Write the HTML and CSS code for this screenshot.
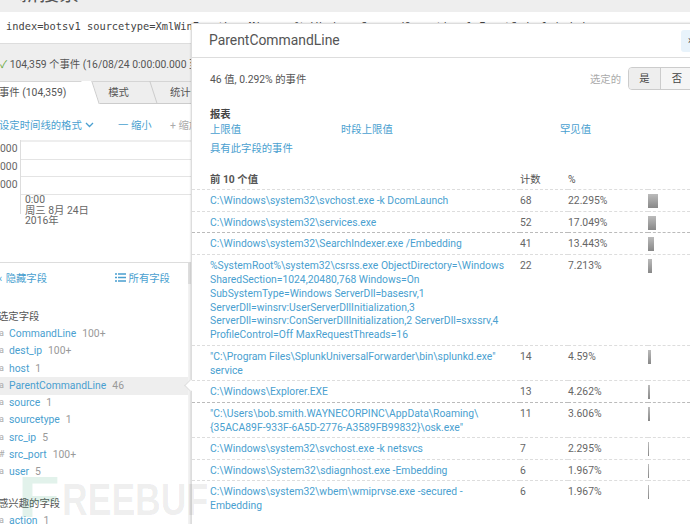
FILE: index.html
```html
<!DOCTYPE html>
<html lang="zh">
<head>
<meta charset="utf-8">
<title>新搜索</title>
<link rel="stylesheet" href="styles.css">
</head>
<body>
<div class="page">
  <div class="titlebar"><span class="title">‹ 新搜索</span></div>
  <div class="searchbar">index=botsv1 sourcetype=XmlWinEventLog:Microsoft-Windows-Sysmon/Operational EventCode=1 | dedup</div>
  <div class="status"><span class="check">✓</span> 104,359 个事件 (16/08/24 0:00:00.000 至 16/08/25 0:00:00.000)</div>
  <div class="tabs">
    <div class="tab active">事件 (104,359)</div>
    <div class="tab">模式</div>
    <div class="tab">统计信息</div>
  </div>
  <div class="timeline-tools">
    <span class="tl-format">设定时间线的格式 <svg class="chev" width="9" height="6" viewBox="0 0 9 6"><path d="M1 1l3.500 3.500L8 1" fill="none" stroke="#4a9fd0" stroke-width="1.300"/></svg></span>
    <span class="tl-out">一 缩小</span>
    <span class="tl-in">+ 缩放</span>
  </div>
  <div class="chart">
    <div class="axis">
      <div>000</div><div>000</div><div>000</div>
    </div>
    <div class="plot">
      <div class="gridline"></div><div class="gridline"></div><div class="gridline"></div>
    </div>
  </div>
  <div class="ticks">0:00<br>周三 8月 24日<br>2016年</div>
  <div class="fields">
    <div class="field-col">
      <div class="field-tools">
        <span class="hide-f"><span class="lt">‹</span> 隐藏字段</span>
        <span class="all-f"><svg width="11" height="9" viewBox="0 0 11 9"><path d="M0 1h2M3 1h8M0 4.500h2M3 4.500h8M0 8h2M3 8h8" stroke="#4a9fd0" stroke-width="1.300"/></svg> 所有字段</span>
      </div>
      <div class="group-title">选定字段</div>
      <ul class="field-list">
        <li><i>a</i><a>CommandLine</a><b>100+</b></li>
        <li><i>a</i><a>dest_ip</a><b>100+</b></li>
        <li><i>a</i><a>host</a><b>1</b></li>
        <li class="sel"><i>a</i><a>ParentCommandLine</a><b>46</b></li>
        <li><i>a</i><a>source</a><b>1</b></li>
        <li><i>a</i><a>sourcetype</a><b>1</b></li>
        <li><i>a</i><a>src_ip</a><b>5</b></li>
        <li><i>#</i><a>src_port</a><b>100+</b></li>
        <li><i>a</i><a>user</a><b>5</b></li>
      </ul>
      <div class="group-title second">感兴趣的字段</div>
      <ul class="field-list">
        <li><i>a</i><a>action</a><b>1</b></li>
      </ul>
    </div>
    <div class="rail"><div class="thumb"></div></div>
  </div>
</div>

<div class="popover">
  <div class="pop-head"><h2>ParentCommandLine</h2><span class="close">×</span></div>
  <div class="pop-body">
    <div class="summary">
      <span>46 值, 0.292% 的事件</span>
      <div class="selected"><span class="sel-label">选定的</span><div class="seg"><span class="on">是</span><span>否</span></div></div>
    </div>
    <h3 class="reports">报表</h3>
    <div class="links"><a>上限值</a><a>时段上限值</a><a>罕见值</a></div>
    <div class="withfield"><a>具有此字段的事件</a></div>
  </div>
  <table class="vals">
    <thead><tr><th class="c1">前 10 个值</th><th class="c2">计数</th><th class="c3">%</th><th class="c4"></th></tr></thead>
    <tbody>
      <tr><td class="c1"><a>C:\Windows\system32\svchost.exe -k DcomLaunch</a></td><td>68</td><td>22.295%</td><td><span class="bar" style="width:10px"></span></td></tr>
      <tr class="heavy"><td class="c1"><a>C:\Windows\system32\services.exe</a></td><td>52</td><td>17.049%</td><td><span class="bar" style="width:8px"></span></td></tr>
      <tr><td class="c1"><a>C:\Windows\system32\SearchIndexer.exe /Embedding</a></td><td>41</td><td>13.443%</td><td><span class="bar" style="width:6px"></span></td></tr>
      <tr><td class="c1"><a>%SystemRoot%\system32\csrss.exe ObjectDirectory=\Windows SharedSection=1024,20480,768 Windows=On SubSystemType=Windows ServerDll=basesrv,1 ServerDll=winsrv:UserServerDllInitialization,3 ServerDll=winsrv:ConServerDllInitialization,2 ServerDll=sxssrv,4 ProfileControl=Off MaxRequestThreads=16</a></td><td>22</td><td>7.213%</td><td><span class="bar" style="width:4px"></span></td></tr>
      <tr><td class="c1"><a>"C:\Program Files\SplunkUniversalForwarder\bin\splunkd.exe" service</a></td><td>14</td><td>4.59%</td><td><span class="bar" style="width:3px"></span></td></tr>
      <tr class="heavy"><td class="c1"><a>C:\Windows\Explorer.EXE</a></td><td>13</td><td>4.262%</td><td><span class="bar" style="width:2px"></span></td></tr>
      <tr><td class="c1"><a>"C:\Users\bob.smith.WAYNECORPINC\AppData\Roaming\ {35ACA89F-933F-6A5D-2776-A3589FB99832}\osk.exe"</a></td><td>11</td><td>3.606%</td><td><span class="bar" style="width:2px"></span></td></tr>
      <tr><td class="c1"><a>C:\Windows\system32\svchost.exe -k netsvcs</a></td><td>7</td><td>2.295%</td><td><span class="bar" style="width:1px"></span></td></tr>
      <tr><td class="c1"><a>C:\Windows\System32\sdiagnhost.exe -Embedding</a></td><td>6</td><td>1.967%</td><td><span class="bar" style="width:1px"></span></td></tr>
      <tr class="last"><td class="c1"><a>C:\Windows\system32\wbem\wmiprvse.exe -secured -Embedding</a></td><td>6</td><td>1.967%</td><td><span class="bar" style="width:1px"></span></td></tr>
    </tbody>
  </table>
</div>
<div class="arrow"></div>
<div class="watermark"><span class="wm-f">F</span><span class="wm-r">REEBUF</span></div>
</body>
</html>
```
FILE: styles.css
```css
* { box-sizing: border-box; }
html, body { margin: 0; padding: 0; }
body {
  width: 690px; height: 524px; overflow: hidden; position: relative;
  background: #fff; color: #555;
  font-family: Roboto, "Noto Sans CJK SC", sans-serif; font-size: 10.350px;
}
.page { width: 690px; height: 524px; overflow: hidden; }
.titlebar { height: 12px; background: #eee; overflow: hidden; position: relative; }
.title { position: absolute; left: 8px; top: -16px; font-size: 20px; line-height: 20px; color: #555; white-space: nowrap; }
.searchbar {
  height: 31px; background: #fff; padding: 7px 6px 0; white-space: nowrap; overflow: hidden;
  font-family: "DejaVu Sans Mono", monospace; font-size: 10.350px; line-height: 14px; color: #444;
}
.status { height: 38px; background: #eee; border-top: 1px solid #ddd; padding-left: 0; line-height: 41px; white-space: nowrap; overflow: hidden; color: #555; }
.check { color: #65a637; }
.tabs { display: flex; height: 23px; background: #eee; }
.tab { position: relative; width: 63px; text-align: center; border-bottom: 1px solid #ccc; border-top: 1px solid #d5d5d5; line-height: 21px; padding-right: 8px; white-space: nowrap; }
.tab::after { content: ""; position: absolute; right: 0; top: -1px; bottom: -1px; width: 1px; background: #ccc; transform: skewX(18deg); }
.tab:last-child { flex: 1; text-align: left; padding-left: 16px; }
.tab:last-child::after { display: none; }
.tab.active { width: 91px; background: #fff; text-align: left; text-indent: -1px; border-bottom: 0; z-index: 1; padding-right: 0; }
.tab.active::after { width: 10px; right: -5px; top: -1px; bottom: 0; background: #fff; border-right: 1px solid #ccc; }
.timeline-tools { display: flex; height: 36px; align-items: center; padding-top: 5px; color: #4a9fd0; white-space: nowrap; }
.tl-format { margin-left: -1px; width: 119px; }
.chev { vertical-align: 1px; margin-left: 1px; }
.tl-out { width: 52px; }
.tl-in { color: #aaa; }
.chart { display: flex; height: 53px; }
.axis { width: 21px; color: #666; line-height: 18px; border-right: 1px solid #ddd; padding-right: 4px; text-align: right; overflow: hidden; }
.plot { flex: 1; border-top: 2px solid #eee; }
.gridline { height: 17.500px; border-bottom: 1px solid #e4e4e4; }
.ticks { position: relative; padding-left: 25px; line-height: 10.500px; color: #666; height: 69px; padding-top: 2px; }
.ticks::before { content: ""; position: absolute; left: 20px; top: 0; width: 1px; height: 21px; background: #ddd; }
.fields { border-top: 1px solid #ddd; height: 262px; display: flex; width: 191px; }
.field-col { width: 188px; }
.rail { width: 3px; background: #f2f2f2; }
.thumb { height: 21px; background: #ddd; }
.field-tools { display: flex; height: 28px; align-items: center; color: #4a9fd0; white-space: nowrap; }
.hide-f { width: 115px; }
.lt { margin-left: -1px; margin-right: 1px; }
.group-title { margin-top: 19px; line-height: 14px; height: 14px; margin-left: -2px; color: #555; white-space: nowrap; }
.group-title.second { margin-top: 16px; }
.field-list { list-style: none; margin: 1px 0 0; padding: 0; }
.field-list li { height: 17.300px; line-height: 17.300px; white-space: nowrap; display: flex; }
.field-list li.sel { background: #eee; box-shadow: 0 1px #eee; }
.field-list i { width: 9px; font-style: normal; color: #aaa; font-size: 9px; text-indent: -1px; }
.field-list a { color: #4a9fd0; }
.field-list b { font-weight: 400; color: #999; margin-left: 6px; }
.popover { position: absolute; left: 191px; top: 23px; width: 520px; height: 510px; background: #fff; border: 1px solid #ddd; box-shadow: 0 0 2px rgba(0,0,0,.2); }
.pop-head { height: 34px; border-bottom: 1px solid #ddd; position: relative; }
.pop-head h2 { margin: 0; font-weight: 400; font-size: 13.900px; line-height: 33px; padding-left: 17px; color: #555; }
.close { position: absolute; left: 489px; top: 6px; width: 20px; height: 22px; background: #e8f3fb; border-radius: 3px; padding-left: 7px; line-height: 22px; color: #555; }
.pop-body { padding: 0 18px; }
.summary { height: 33px; display: flex; align-items: center; margin-top: 4px; position: relative; }
.selected { display: flex; align-items: center; position: absolute; left: 380px; top: 5px; white-space: nowrap; }
.sel-label { color: #aaa; margin-right: 7px; }
.seg { display: flex; border: 1px solid #ccc; border-radius: 4px; height: 23px; background: #f5f5f5; width: 70px; overflow: hidden; }
.seg span { width: 32px; text-align: center; line-height: 21px; color: #444; }
.seg .on { background: #eee; border-right: 1px solid #ccc; }
.reports { margin: 13px 0 0; font-size: 10.350px; line-height: 14px; color: #444; }
.links { display: flex; line-height: 14px; margin-top: 1px; }
.links a, .withfield a { color: #4a9fd0; }
.links a:nth-child(1) { width: 131px; }
.links a:nth-child(2) { width: 219px; }
.withfield { margin-top: 5px; line-height: 14px; }
.vals { border-collapse: separate; border-spacing: 0; table-layout: fixed; width: 498px; margin-top: 17px; line-height: 13.830px; }
.vals th { text-align: left; font-weight: 700; padding: 0 0 2px; height: 16px; color: #555; line-height: 14px; }
.vals th.c2, .vals th.c3 { font-weight: 400; }
.vals td { padding: 4px 0 2.700px; vertical-align: top; border-top: 1px dashed #ddd; color: #666; }
.vals tr.heavy + tr td { border-top-color: #bbb; }
.vals .c1 { width: 328px; padding-left: 18px; padding-right: 6px; }
.vals .c2 { width: 48px; }
.vals .c3 { width: 80px; }
.vals .c4 { width: 42px; }
.vals a { color: #4a9fd0; }
.bar { display: block; height: 14px; background: linear-gradient(#bbb, #888); }
.arrow { position: absolute; left: 186px; top: 381px; width: 9px; height: 9px; background: #fff; border-left: 1px solid #ddd; border-bottom: 1px solid #ddd; transform: rotate(45deg); }
.watermark { position: absolute; left: 0; top: 460px; width: 240px; height: 64px; font-family: "Liberation Sans", sans-serif; font-weight: 700; pointer-events: none; white-space: nowrap; }
.wm-f, .wm-r { position: absolute; transform-origin: left top; }
.wm-f { left: 18px; top: 8px; font-size: 58px; line-height: 58px; transform: scaleX(1.180); color: rgba(60,170,120,.15); }
.wm-r { left: 62px; top: 17px; font-size: 45px; line-height: 45px; transform: scaleX(.790); color: rgba(0,0,0,.075); }
```
